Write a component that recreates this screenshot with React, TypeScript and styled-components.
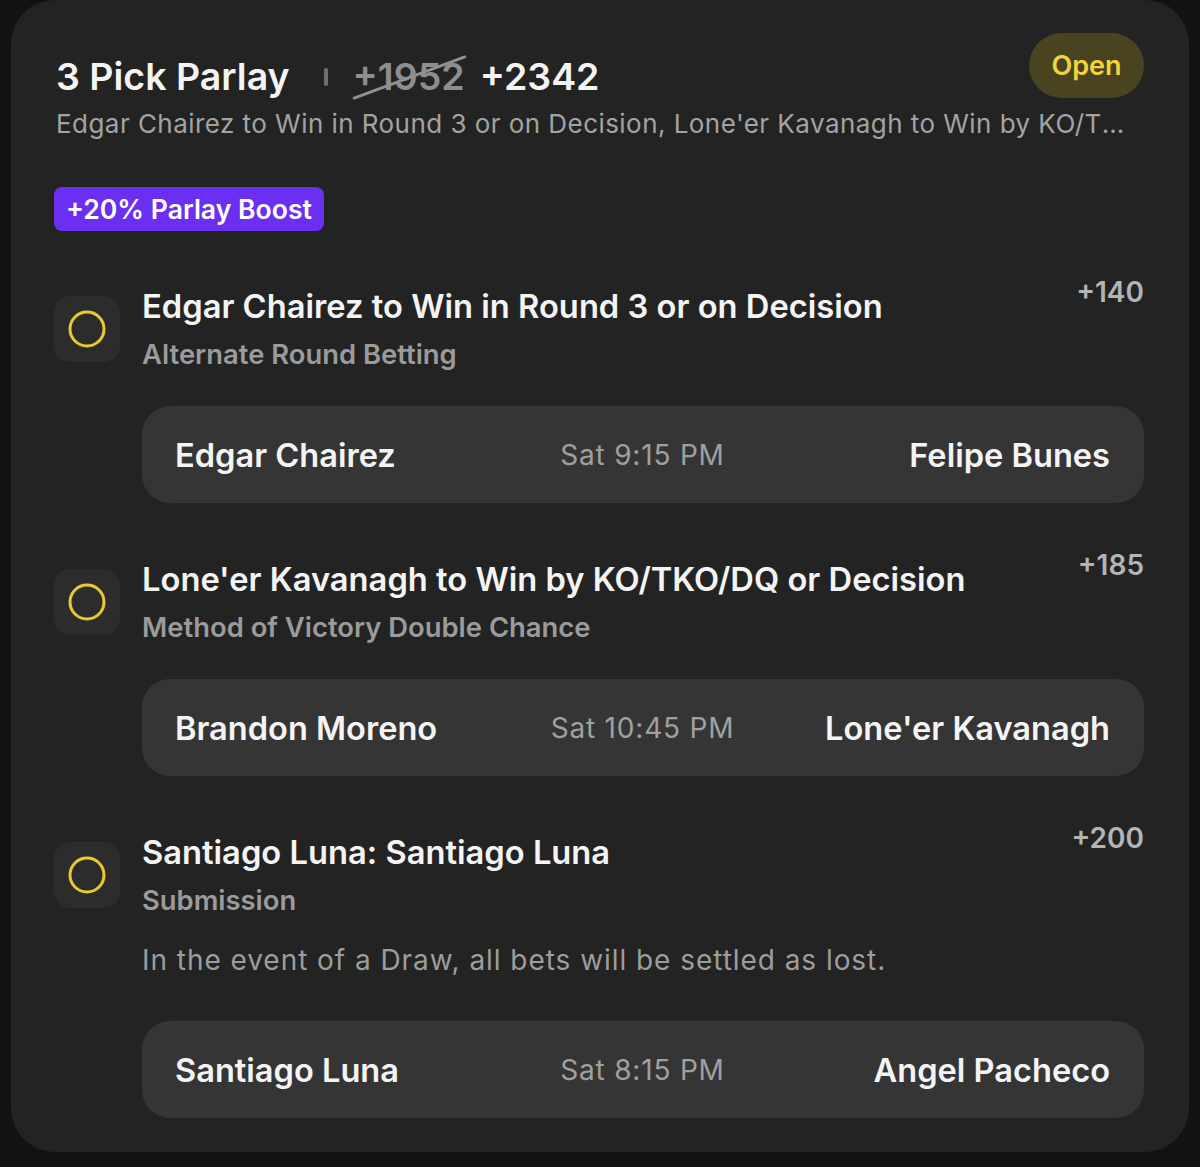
import React from 'react';
import styled, { createGlobalStyle } from 'styled-components';

const Global = createGlobalStyle`
  html, body { margin: 0; padding: 0; background: #121212; }
  body { font-family: Inter, "Noto Sans", sans-serif; -webkit-font-smoothing: antialiased; }
`;

const Page = styled.div`
  box-sizing: border-box;
  min-height: 1167px;
  padding: 0 11px 15px 11px;
`;

const Card = styled.div`
  background: #232323;
  border-radius: 44px;
  padding: 33px 45px 34px 43px;
`;

const Header = styled.div`
  display: flex;
  justify-content: space-between;
  align-items: flex-start;
`;

const TitleRow = styled.div`
  display: flex;
  align-items: center;
  margin-top: 22px;
  margin-left: 2px;
  height: 44px;
`;

const Title = styled.h1`
  margin: 0;
  font-size: 37.5px;
  line-height: 44px;
  font-weight: 600;
  color: #f4f4f4;
`;

const Divider = styled.span`
  width: 4px;
  height: 18px;
  border-radius: 2px;
  background: #6f6f6f;
  margin: 0 25px 0 34px;
`;

const OldOdds = styled.span`
  position: relative;
  font-size: 37.5px;
  line-height: 44px;
  font-weight: 600;
  color: #8e8e8e;
  &::after {
    content: '';
    position: absolute;
    left: 50%;
    top: 50%;
    width: 121px;
    height: 3px;
    margin: -1px 0 0 -60px;
    border-radius: 2px;
    background: #909090;
    transform: rotate(-20.4deg);
  }
`;

const NewOdds = styled.span`
  font-size: 37.5px;
  line-height: 44px;
  font-weight: 600;
  color: #f4f4f4;
  margin-left: 15px;
`;

const StatusBadge = styled.div`
  display: flex;
  align-items: center;
  justify-content: center;
  width: 115px;
  height: 65px;
  border-radius: 33px;
  background: #4a4320;
  color: #f4d43a;
  font-size: 27px;
  font-weight: 600;
`;

const Summary = styled.div`
  margin: 8px 0 0 2px;
  font-size: 26px;
  line-height: 34px;
  letter-spacing: 0.45px;
  color: #a3a3a3;
  white-space: nowrap;
  overflow: hidden;
  text-overflow: ellipsis;
  padding-right: 12px;
`;

const Boost = styled.div`
  display: inline-flex;
  align-items: center;
  height: 44px;
  margin-top: 46px;
  padding: 0 12px;
  border-radius: 8px;
  background: #6a2ff0;
  color: #ffffff;
  font-size: 26.6px;
  font-weight: 600;
`;

const Legs = styled.div`
  display: flex;
  flex-direction: column;
  gap: 56px;
  margin-top: 55px;
`;

const Leg = styled.div`
  display: flex;
  flex-direction: column;
`;

const LegHead = styled.div`
  display: grid;
  grid-template-columns: 66px 1fr auto;
  column-gap: 22px;
  align-items: center;
`;

const IconBox = styled.div`
  width: 66px;
  height: 66px;
  border-radius: 16px;
  background: #2c2c2c;
  display: flex;
  align-items: center;
  justify-content: center;
`;

const LegText = styled.div`
  display: flex;
  flex-direction: column;
`;

const LegTitle = styled.div`
  font-size: 32.7px;
  line-height: 40px;
  font-weight: 600;
  color: #f4f4f4;
`;

const LegMarket = styled.div`
  margin-top: 10px;
  font-size: 27.4px;
  line-height: 36px;
  font-weight: 600;
  color: #9b9b9b;
`;

const LegOdds = styled.div`
  align-self: start;
  margin-top: -12px;
  font-size: 28px;
  line-height: 36px;
  font-weight: 600;
  color: #b4b4b4;
`;

const Body = styled.div`
  margin-left: 88px;
  display: flex;
  flex-direction: column;
`;

const Note = styled.div`
  margin-top: 22px;
  font-size: 28px;
  line-height: 40px;
  letter-spacing: 0.95px;
  color: #9d9d9d;
`;

const Matchup = styled.div<{ $gap: number }>`
  margin-top: ${(p) => p.$gap}px;
  height: 97px;
  border-radius: 28px;
  background: #353535;
  display: grid;
  grid-template-columns: 1fr auto 1fr;
  align-items: center;
  padding: 0 34px 0 33px;
`;

const Fighter = styled.div<{ $right?: boolean }>`
  font-size: 32.6px;
  font-weight: 600;
  color: #f4f4f4;
  text-align: ${(p) => (p.$right ? 'right' : 'left')};
`;

const Time = styled.div`
  font-size: 28px;
  letter-spacing: 0.8px;
  color: #a0a0a0;
`;

const Ring = () => (
  <svg width="38" height="38" viewBox="0 0 38 38">
    <circle cx="19" cy="19" r="17" fill="none" stroke="#e9c92f" strokeWidth="3" />
  </svg>
);

type LegData = {
  title: string;
  market: string;
  odds: string;
  note?: string;
  home: string;
  time: string;
  away: string;
};

const legs: LegData[] = [
  {
    title: 'Edgar Chairez to Win in Round 3 or on Decision',
    market: 'Alternate Round Betting',
    odds: '+140',
    home: 'Edgar Chairez',
    time: 'Sat 9:15 PM',
    away: 'Felipe Bunes',
  },
  {
    title: "Lone'er Kavanagh to Win by KO/TKO/DQ or Decision",
    market: 'Method of Victory Double Chance',
    odds: '+185',
    home: 'Brandon Moreno',
    time: 'Sat 10:45 PM',
    away: "Lone'er Kavanagh",
  },
  {
    title: 'Santiago Luna: Santiago Luna',
    market: 'Submission',
    odds: '+200',
    note: 'In the event of a Draw, all bets will be settled as lost.',
    home: 'Santiago Luna',
    time: 'Sat 8:15 PM',
    away: 'Angel Pacheco',
  },
];

export default function App() {
  return (
    <Page>
      <Global />
      <Card>
        <Header>
          <TitleRow>
            <Title>3 Pick Parlay</Title>
            <Divider />
            <OldOdds>+1952</OldOdds>
            <NewOdds>+2342</NewOdds>
          </TitleRow>
          <StatusBadge>Open</StatusBadge>
        </Header>
        <Summary>
          Edgar Chairez to Win in Round 3 or on Decision, Lone'er Kavanagh to Win by KO/TKO/DQ or Decision, Santiago Luna: Santiago Luna
        </Summary>
        <Boost>+20% Parlay Boost</Boost>
        <Legs>
          {legs.map((l) => (
            <Leg key={l.title}>
              <LegHead>
                <IconBox>
                  <Ring />
                </IconBox>
                <LegText>
                  <LegTitle>{l.title}</LegTitle>
                  <LegMarket>{l.market}</LegMarket>
                </LegText>
                <LegOdds>{l.odds}</LegOdds>
              </LegHead>
              <Body>
                {l.note && <Note>{l.note}</Note>}
                <Matchup $gap={l.note ? 41 : 34}>
                  <Fighter>{l.home}</Fighter>
                  <Time>{l.time}</Time>
                  <Fighter $right>{l.away}</Fighter>
                </Matchup>
              </Body>
            </Leg>
          ))}
        </Legs>
      </Card>
    </Page>
  );
}
